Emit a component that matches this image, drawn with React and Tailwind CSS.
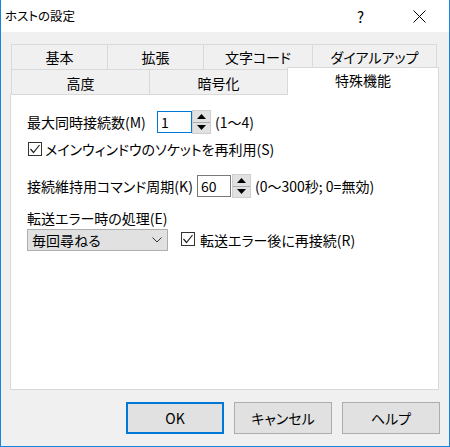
import React from "react";

const font = { fontFamily: '"Noto Sans CJK JP", "Noto Sans", sans-serif', fontFeatureSettings: '"palt"' };

function Spinner() {
  return (
    <div className="flex flex-col w-[19px] h-[24px] bg-[#e1e1e1] border border-[#cfcfcf]">
      <div className="flex-1 flex items-center justify-center border-b border-[#adadad]">
        <svg width="9" height="5" viewBox="0 0 9 5"><polygon points="0,5 9,5 4.5,0" fill="#000" /></svg>
      </div>
      <div className="flex-1 flex items-center justify-center">
        <svg width="9" height="5" viewBox="0 0 9 5"><polygon points="0,0 9,0 4.5,5" fill="#000" /></svg>
      </div>
    </div>
  );
}

function Check() {
  return (
    <div className="w-[14px] h-[14px] border border-[#333] bg-white flex items-center justify-center shrink-0">
      <svg width="12" height="12" viewBox="0 0 12 12">
        <polyline points="1.5,6 4.5,9.5 10.5,2" fill="none" stroke="#222" strokeWidth="1.2" />
      </svg>
    </div>
  );
}

export default function App() {
  return (
    <div className="w-[450px] h-[447px] flex flex-col bg-white border-l border-r border-b border-[#1883d7] text-black" style={font}>
      <div className="h-[32px] shrink-0 flex items-center bg-white relative">
        <span className="ml-[4px] text-[12.5px]">ホストの設定</span>
        <span className="absolute left-[356px] top-[6px] text-[15px]">?</span>
        <svg className="absolute left-[412px] top-[10px]" width="13" height="13" viewBox="0 0 13 13">
          <line x1="0.5" y1="0.5" x2="12.5" y2="12.5" stroke="#000" strokeWidth="1" />
          <line x1="12.5" y1="0.5" x2="0.5" y2="12.5" stroke="#000" strokeWidth="1" />
        </svg>
      </div>
      <div className="flex-1 bg-[#f0f0f0] flex flex-col pl-[9px] pt-[12px] text-[14px]">
        <div className="ml-[1px] flex">
          {[["基本", "w-[96px]"], ["拡張", "w-[96px]"], ["文字コード", "w-[109px]"]].map(([t, w]) => (
            <div key={t} className={`${w} h-[25px] border-t border-l border-[#d9d9d9] flex items-center justify-center`}>{t}</div>
          ))}
          <div className="w-[125px] h-[25px] border-t border-l border-r border-[#d9d9d9] flex items-center justify-center">ダイアルアップ</div>
        </div>
        <div className="ml-[1px] flex items-start">
          <div className="w-[138px] h-[25px] border-t border-l border-[#d9d9d9] flex items-center justify-center pt-[2px]">高度</div>
          <div className="w-[138px] h-[25px] border-t border-l border-[#d9d9d9] flex items-center justify-center pt-[2px]">暗号化</div>
          <div className="relative z-10 w-[152px] h-[28px] -mt-[2px] bg-white border-t border-l border-r border-[#d9d9d9] flex items-center justify-center pb-[2px]">特殊機能</div>
        </div>
        <div className="w-[429px] h-[296px] -mt-[1px] bg-white border border-[#d9d9d9] flex flex-col pl-[16px]">
          <div className="mt-[15px] flex items-center h-[24px]">
            <span className="w-[130px] whitespace-nowrap">最大同時接続数(M)</span>
            <div className="w-[35px] h-[22px] border border-[#0078d7] bg-white flex items-center pl-[3px]">1</div>
            <Spinner />
            <span className="ml-[4px]">(1〜4)</span>
          </div>
          <div className="mt-[7px] flex items-center h-[16px]">
            <div className="ml-[1px]"><Check /></div>
            <span className="ml-[3px] whitespace-nowrap">メインウィンドウのソケットを再利用(S)</span>
          </div>
          <div className="mt-[17px] flex items-center h-[24px]">
            <span className="w-[170px] whitespace-nowrap">接続維持用コマンド周期(K)</span>
            <div className="w-[34px] h-[22px] border border-[#7a7a7a] bg-white flex items-center pl-[3px]">60</div>
            <div className="ml-[1px]"><Spinner /></div>
            <span className="ml-[4px] whitespace-nowrap">(0〜300秒; 0=無効)</span>
          </div>
          <div className="mt-[12px] flex items-center h-[16px]">
            <span className="whitespace-nowrap">転送エラー時の処理(E)</span>
          </div>
          <div className="mt-[3px] flex items-center h-[22px]">
            <div className="w-[141px] h-[22px] bg-[#e1e1e1] border border-[#adadad] flex items-center justify-between pl-[4px] pr-[5px]">
              <span>毎回尋ねる</span>
              <svg width="10" height="6" viewBox="0 0 10 6"><polyline points="0.5,0.5 5,5 9.5,0.5" fill="none" stroke="#333" strokeWidth="1" /></svg>
            </div>
            <div className="ml-[13px] -mt-[3px]"><Check /></div>
            <span className="ml-[5px] whitespace-nowrap">転送エラー後に再接続(R)</span>
          </div>
        </div>
        <div className="mt-[12px] flex gap-[10px] ml-[116px]">
          <button className="w-[98px] h-[32px] bg-[#e1e1e1] border-2 border-[#0078d7] flex items-center justify-center">OK</button>
          <button className="w-[98px] h-[32px] bg-[#e1e1e1] border border-[#adadad] flex items-center justify-center">キャンセル</button>
          <button className="w-[98px] h-[32px] bg-[#e1e1e1] border border-[#adadad] flex items-center justify-center">ヘルプ</button>
        </div>
      </div>
    </div>
  );
}
